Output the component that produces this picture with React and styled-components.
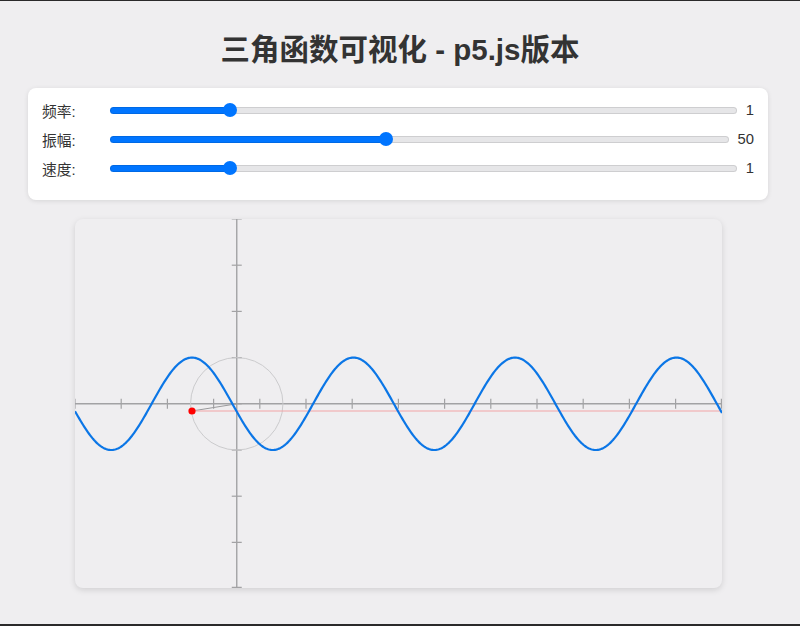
import React from 'react';
import styled, { createGlobalStyle } from 'styled-components';

const Global = createGlobalStyle`
  html, body { margin: 0; padding: 0; background: #efeef0; }
  body { font-family: "Liberation Sans", Arial, "Noto Sans CJK SC", sans-serif; color: #333; }
`;

const Page = styled.div`
  box-sizing: border-box;
  height: 626px;
  border-top: 1px solid #2a2a2a;
  border-bottom: 2px solid #2a2a2a;
  background: #efeef0;
  overflow: hidden;
`;

const Title = styled.h1`
  margin: 31px 0 20px;
  height: 36px;
  line-height: 36px;
  text-align: center;
  font-size: 29.5px;
  font-weight: 700;
  color: #333;
  font-family: "Liberation Sans", Arial, "Noto Sans CJK SC", sans-serif;
`;

const Panel = styled.div`
  box-sizing: border-box;
  margin: 0 32px 0 28px;
  height: 112px;
  padding: 14px 14px 0 14px;
  background: #fff;
  border-radius: 8px;
  box-shadow: 0 1px 5px rgba(0, 0, 0, 0.1);
`;

const Row = styled.div`
  display: flex;
  align-items: center;
  height: 16px;
  margin-bottom: 13px;
`;

const Label = styled.label`
  width: 60px;
  margin-right: 8px;
  flex: none;
  font-size: 14.8px;
  color: #333;
`;

const Value = styled.span`
  flex: none;
  margin-left: 9px;
  font-size: 14.8px;
  color: #333;
`;

const Slider = styled.input.attrs({ type: 'range' })`
  flex: 1;
  min-width: 0;
  margin: 0;
  height: 14px;
  -webkit-appearance: none;
  appearance: none;
  background: transparent;
  &::-webkit-slider-runnable-track {
    height: 7px;
    border-radius: 4px;
    background: linear-gradient(to right, #0075ff var(--fill), #e6e6e8 var(--fill));
    box-shadow: inset 0 0 0 1px rgba(0, 0, 0, 0.1);
  }
  &::-webkit-slider-thumb {
    -webkit-appearance: none;
    appearance: none;
    width: 14px;
    height: 14px;
    margin-top: -3.5px;
    border-radius: 50%;
    border: none;
    background: #0075ff;
  }
`;

const CanvasBox = styled.div`
  margin: 19px 0 0 75px;
  width: 647px;
  height: 369px;
  border-radius: 8px;
  background: #efeef0;
  box-shadow: 0 2px 6px rgba(0, 0, 0, 0.13);
  overflow: hidden;
`;

const W = 647;
const H = 369;
const OX = 161.75;
const OY = 184.8;
const U = 46.2;

function RangeRow({ label, min, max, value, step }) {
  const frac = (value - min) / (max - min);
  return (
    <Row>
      <Label>{label}</Label>
      <Slider
        min={min}
        max={max}
        step={step}
        defaultValue={value}
        style={{ '--fill': `calc(7px + ${frac} * (100% - 14px))` }}
      />
      <Value>{value}</Value>
    </Row>
  );
}

function Plot() {
  const P = 161.5;
  const xp = 117;
  const A = 46.2;
  let d = '';
  for (let x = 0; x <= W; x += 1) {
    const y = OY - A * Math.cos((2 * Math.PI * (x - xp)) / P);
    d += (x === 0 ? 'M' : 'L') + x + ' ' + y.toFixed(2) + ' ';
  }
  const xt = [];
  for (let k = 0; k <= 14; k++) xt.push(Math.min(k * U, W - 0.6));
  const yt = [];
  for (let k = 0; k <= 8; k++) yt.push(Math.min(k * U, H - 0.6));
  const dot = { x: 117, y: 192 };
  return (
    <svg width={W} height={H} viewBox={`0 0 ${W} ${H}`} style={{ display: 'block' }}>
      <line x1={0} y1={OY} x2={W} y2={OY} stroke="#a2a2a4" strokeWidth="1.4" />
      <line x1={OX} y1={0} x2={OX} y2={H} stroke="#a2a2a4" strokeWidth="1.4" />
      {xt.map((x, i) => (
        <line key={'x' + i} x1={x} y1={OY - 5} x2={x} y2={OY + 5} stroke="#a2a2a4" strokeWidth="1.2" />
      ))}
      {yt.map((y, i) => (
        <line key={'y' + i} x1={OX - 5} y1={y} x2={OX + 5} y2={y} stroke="#a2a2a4" strokeWidth="1.2" />
      ))}
      <circle cx={OX} cy={OY} r={U} fill="none" stroke="#cbcbcd" strokeWidth="1" />
      <line x1={OX} y1={OY} x2={dot.x} y2={dot.y} stroke="#9a9a9c" strokeWidth="1" />
      <line x1={dot.x} y1={dot.y} x2={W} y2={dot.y} stroke="#f2a4a6" strokeWidth="1" />
      <path d={d} fill="none" stroke="#0b76e6" strokeWidth="2.2" />
      <circle cx={dot.x} cy={dot.y} r="3.6" fill="#f00" />
    </svg>
  );
}

export default function App() {
  return (
    <Page>
      <Global />
      <Title>三角函数可视化 - p5.js版本</Title>
      <Panel>
        <RangeRow label="频率:" min={0.1} max={5} step={0.1} value={1} />
        <RangeRow label="振幅:" min={10} max={100} step={1} value={50} />
        <RangeRow label="速度:" min={0.1} max={5} step={0.1} value={1} />
      </Panel>
      <CanvasBox>
        <Plot />
      </CanvasBox>
    </Page>
  );
}
